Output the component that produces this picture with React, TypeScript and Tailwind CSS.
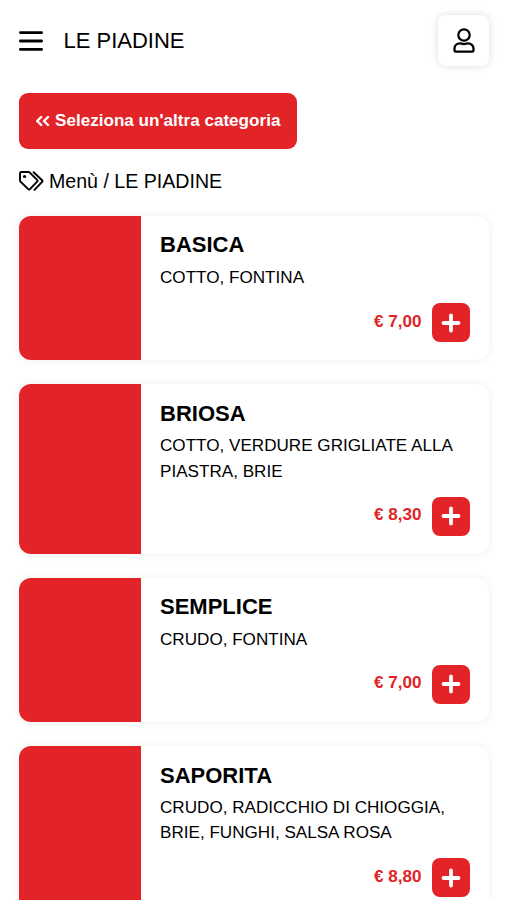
type Dish = {
  name: string
  ingredients: string
  price: string
}

const dishes: Dish[] = [
  { name: 'BASICA', ingredients: 'COTTO, FONTINA', price: '7,00' },
  { name: 'BRIOSA', ingredients: 'COTTO, VERDURE GRIGLIATE ALLA PIASTRA, BRIE', price: '8,30' },
  { name: 'SEMPLICE', ingredients: 'CRUDO, FONTINA', price: '7,00' },
  { name: 'SAPORITA', ingredients: 'CRUDO, RADICCHIO DI CHIOGGIA, BRIE, FUNGHI, SALSA ROSA', price: '8,80' },
]

const MenuIcon = () => (
  <svg width="24" height="20" viewBox="0 0 24 20" fill="none" stroke="currentColor" strokeWidth="2.8" strokeLinecap="round">
    <path d="M1.4 1.6h21.2M1.4 10h21.2M1.4 18.4h21.2" />
  </svg>
)

const UserIcon = () => (
  <svg width="22" height="26" viewBox="0 0 22 26" fill="none" stroke="currentColor" strokeWidth="2.3" strokeLinejoin="round">
    <circle cx="11" cy="7" r="5.7" />
    <path d="M7 15.4C3.8 15.4 1.5 17.6 1.5 20.6v1.8q0 1.3 1.3 1.3h16.4q1.3 0 1.3-1.3v-1.8C20.5 17.6 18.2 15.4 15 15.4c-1.3 0-2 .6-4 .6s-2.700-.6-4-.6Z" />
  </svg>
)

const ChevronsIcon = () => (
  <svg width="14" height="12" viewBox="0 0 14 12" fill="none" stroke="currentColor" strokeWidth="2.4" strokeLinecap="round" strokeLinejoin="round">
    <path d="M5.2 2 1.2 6l4 4M12 2 8 6l4 4" />
  </svg>
)

const TagsIcon = () => (
  <svg width="25" height="20" viewBox="0 0 25 20" fill="none" stroke="currentColor" strokeWidth="1.9" strokeLinecap="round" strokeLinejoin="round">
    <path d="M2.2 1h7.2q.8 0 1.4.6l7.3 7.3q.9.9 0 1.8l-7.1 7.5q-.9.9-1.8 0L1.6 10.8Q1 10.2 1 9.4V2.2Q1 1 2.2 1Z" />
    <path d="M14.6 1.2l8.5 8q.8.8 0 1.6l-7.6 8.1" />
    <circle cx="5.5" cy="5.5" r="1.6" fill="currentColor" stroke="none" />
  </svg>
)

const PlusIcon = () => (
  <svg width="20" height="20" viewBox="0 0 20 20" fill="none" stroke="currentColor" strokeWidth="3.8" strokeLinecap="round">
    <path d="M10 2.5v15M2.5 10h15" />
  </svg>
)

const DishCard = ({ dish }: { dish: Dish }) => (
  <li className="flex rounded-xl overflow-hidden bg-white shadow-[0_0_8px_rgba(0,0,0,0.07)]">
    <div className="w-[122px] shrink-0 bg-[#e22327]" />
    <div className="flex-1 px-[19px] pt-[15.3px] pb-[18px]">
      <h2 className="text-[22px] leading-[28px] font-bold">{dish.name}</h2>
      <p className="mt-[5.7px] text-[17.1px] leading-[25.2px]">{dish.ingredients}</p>
      <div className="mt-[12.8px] flex items-center justify-end gap-[10.5px]">
        <span className="text-[17.1px] leading-[26px] pb-[2px] font-bold text-[#e22327]">€ {dish.price}</span>
        <button aria-label="Aggiungi" className="w-[38px] h-[39px] flex items-center justify-center rounded-lg bg-[#e22327] text-white">
          <PlusIcon />
        </button>
      </div>
    </div>
  </li>
)

const App = () => {
  return (
    <div className="h-[900px] overflow-hidden bg-white pl-[19px] pr-[18px] text-black font-['Liberation_Sans',Arial,sans-serif]">
      <header className="h-[81px] flex items-center">
        <button aria-label="Menu">
          <MenuIcon />
        </button>
        <h1 className="ml-[20.5px] flex-1 text-[22px] leading-[28px]">LE PIADINE</h1>
        <button aria-label="Profilo" className="w-[51px] h-[51px] flex items-center justify-center rounded-lg bg-white shadow-[0_0_8px_rgba(0,0,0,0.14)]">
          <UserIcon />
        </button>
      </header>

      <main>
        <button className="mt-[12px] h-[56px] w-[278px] flex items-center gap-[5px] rounded-[9px] bg-[#e22327] pl-[17px] text-[17.1px] font-bold text-white whitespace-nowrap">
          <ChevronsIcon />
          Seleziona un'altra categoria
        </button>

        <nav className="mt-[18px] h-[28px] flex items-center gap-[5px] text-[19.6px] leading-[28px]">
          <TagsIcon />
          <span>Menù / LE PIADINE</span>
        </nav>

        <ul className="mt-[21.2px] flex flex-col gap-[24.3px]">
          {dishes.map((dish) => (
            <DishCard key={dish.name} dish={dish} />
          ))}
        </ul>
      </main>
    </div>
  )
}

export default App
